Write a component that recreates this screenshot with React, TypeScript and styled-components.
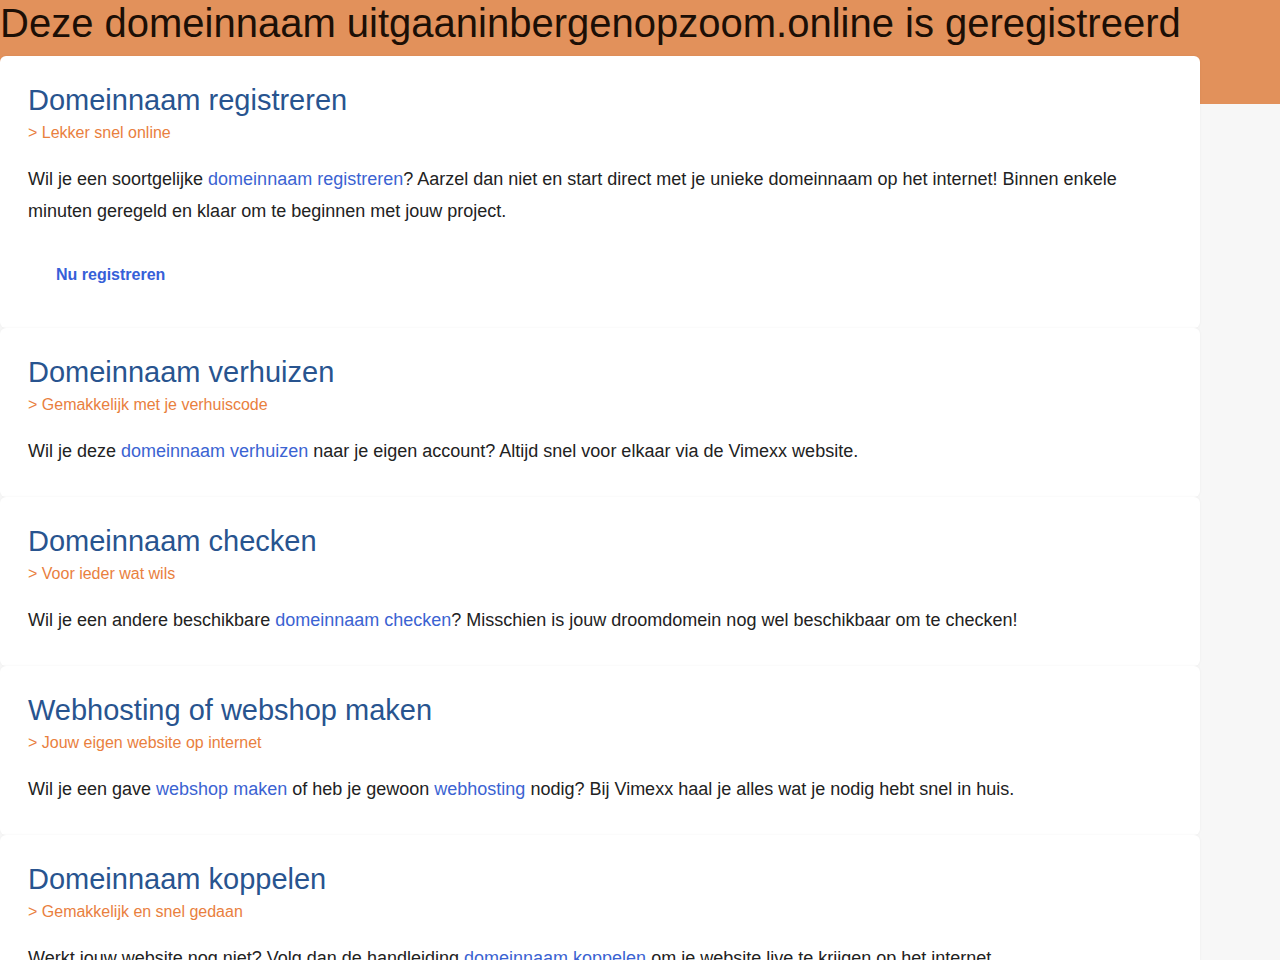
import styled, { createGlobalStyle } from "styled-components";

const GlobalStyle = createGlobalStyle`
  html, body {
    margin: 0;
    padding: 0;
  }
  body {
    font-family: "Liberation Sans", Arial, sans-serif;
    color: #222;
    background: linear-gradient(#e2915b 0, #e2915b 104px, #f7f7f7 104px);
    min-height: 960px;
  }
`;

const Page = styled.div`
  width: 1200px;
`;

const Title = styled.h1`
  margin: 0;
  font-size: 40px;
  font-weight: normal;
  line-height: 46px;
  color: #1c0f06;
  white-space: nowrap;
`;

const Cards = styled.div`
  margin-top: 10px;
  display: flex;
  flex-direction: column;
`;

const Card = styled.section`
  background: #fff;
  border-radius: 6px;
  box-shadow: 0 0 3px rgba(0, 0, 0, 0.05);
  padding: 27px 28px 30px;
`;

const Heading = styled.h2`
  margin: 0;
  font-size: 29px;
  font-weight: normal;
  line-height: 34px;
  color: #28548f;
`;

const Tagline = styled.div`
  margin-top: 6px;
  font-size: 16px;
  line-height: 20px;
  color: #e9803e;
`;

const Text = styled.p`
  margin: 20px 0 0;
  font-size: 18px;
  line-height: 32px;
  color: #222;
`;

const Link = styled.a`
  color: #3b63d2;
  text-decoration: none;
`;

const ActionButton = styled.a`
  display: inline-block;
  margin: 23px 0 -2px;
  padding: 15px 28px;
  font-size: 16px;
  font-weight: bold;
  line-height: 20px;
  color: #3660d8;
  text-decoration: none;
  border-radius: 4px;
`;

interface Section {
  title: string;
  tagline: string;
  body: React.ReactNode;
  action?: string;
}

const sections: Section[] = [
  {
    title: "Domeinnaam registreren",
    tagline: "Lekker snel online",
    body: (
      <>
        Wil je een soortgelijke <Link href="#">domeinnaam registreren</Link>? Aarzel dan niet en
        start direct met je unieke domeinnaam op het internet! Binnen enkele minuten geregeld en
        klaar om te beginnen met jouw project.
      </>
    ),
    action: "Nu registreren",
  },
  {
    title: "Domeinnaam verhuizen",
    tagline: "Gemakkelijk met je verhuiscode",
    body: (
      <>
        Wil je deze <Link href="#">domeinnaam verhuizen</Link> naar je eigen account? Altijd snel
        voor elkaar via de Vimexx website.
      </>
    ),
  },
  {
    title: "Domeinnaam checken",
    tagline: "Voor ieder wat wils",
    body: (
      <>
        Wil je een andere beschikbare <Link href="#">domeinnaam checken</Link>? Misschien is jouw
        droomdomein nog wel beschikbaar om te checken!
      </>
    ),
  },
  {
    title: "Webhosting of webshop maken",
    tagline: "Jouw eigen website op internet",
    body: (
      <>
        Wil je een gave <Link href="#">webshop maken</Link> of heb je gewoon{" "}
        <Link href="#">webhosting</Link> nodig? Bij Vimexx haal je alles wat je nodig hebt snel in
        huis.
      </>
    ),
  },
  {
    title: "Domeinnaam koppelen",
    tagline: "Gemakkelijk en snel gedaan",
    body: (
      <>
        Werkt jouw website nog niet? Volg dan de handleiding{" "}
        <Link href="#">domeinnaam koppelen</Link> om je website live te krijgen op het internet.
      </>
    ),
  },
];

export default function App() {
  return (
    <>
      <GlobalStyle />
      <Page>
        <Title>Deze domeinnaam uitgaaninbergenopzoom.online is geregistreerd</Title>
        <Cards>
          {sections.map((s) => (
            <Card key={s.title}>
              <Heading>{s.title}</Heading>
              <Tagline>&gt; {s.tagline}</Tagline>
              <Text>{s.body}</Text>
              {s.action && <ActionButton href="#">{s.action}</ActionButton>}
            </Card>
          ))}
        </Cards>
      </Page>
    </>
  );
}
